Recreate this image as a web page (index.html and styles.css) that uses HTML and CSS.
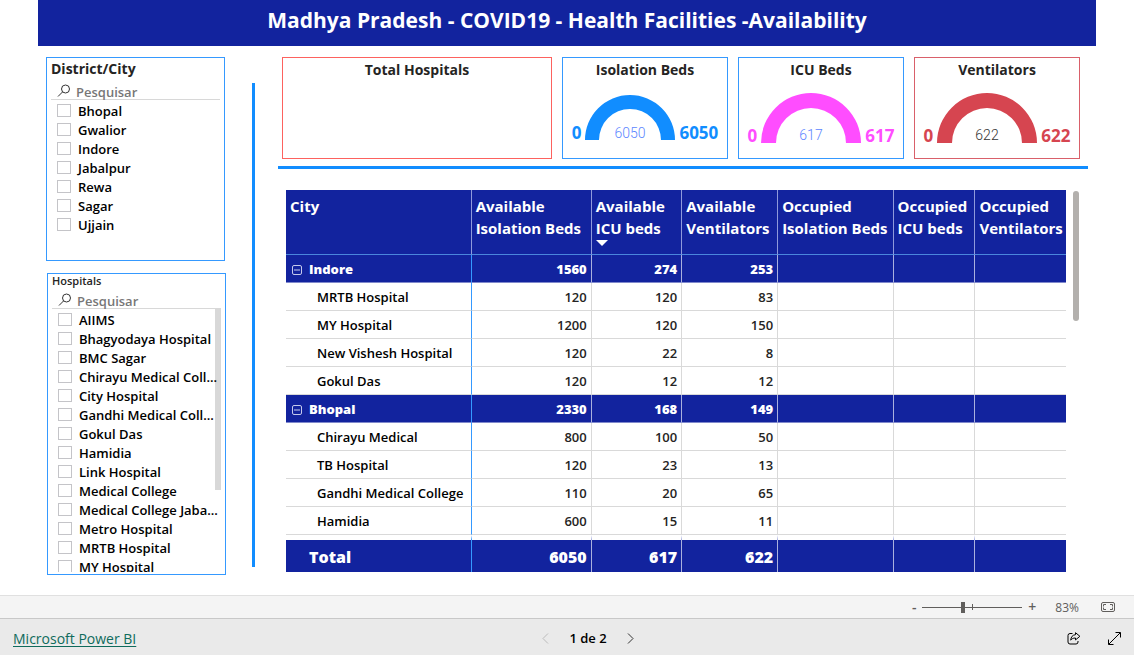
FILE: index.html
```html
<!DOCTYPE html>
<html lang="pt">
<head>
<meta charset="utf-8">
<title>Madhya Pradesh - COVID19 - Health Facilities</title>
<link rel="stylesheet" href="styles.css">
</head>
<body>
<main class="report">
  <h1 class="banner">Madhya Pradesh - COVID19 - Health Facilities -Availability</h1>
  <div class="content">
    <aside class="filters">
      <section class="slicer slicer-city">
        <h2 class="slicer-title">District/City</h2>
        <label class="search">
          <svg class="search-icon" viewBox="0 0 14 14"><circle cx="8.5" cy="5" r="4"/><path d="M5.6 7.9 1 12.5"/></svg>
          <input type="search" placeholder="Pesquisar" aria-label="Pesquisar District/City">
        </label>
        <div class="options">
          <label class="option"><input type="checkbox">Bhopal</label>
          <label class="option"><input type="checkbox">Gwalior</label>
          <label class="option"><input type="checkbox">Indore</label>
          <label class="option"><input type="checkbox">Jabalpur</label>
          <label class="option"><input type="checkbox">Rewa</label>
          <label class="option"><input type="checkbox">Sagar</label>
          <label class="option"><input type="checkbox">Ujjain</label>
        </div>
      </section>
      <section class="slicer slicer-hospital">
        <h2 class="slicer-title small">Hospitals</h2>
        <label class="search">
          <svg class="search-icon" viewBox="0 0 14 14"><circle cx="8.5" cy="5" r="4"/><path d="M5.6 7.9 1 12.5"/></svg>
          <input type="search" placeholder="Pesquisar" aria-label="Pesquisar Hospitals">
        </label>
        <div class="options">
          <span class="list-thumb"></span>
          <label class="option"><input type="checkbox">AIIMS</label>
          <label class="option"><input type="checkbox">Bhagyodaya Hospital</label>
          <label class="option"><input type="checkbox">BMC Sagar</label>
          <label class="option"><input type="checkbox">Chirayu Medical Coll...</label>
          <label class="option"><input type="checkbox">City Hospital</label>
          <label class="option"><input type="checkbox">Gandhi Medical Coll...</label>
          <label class="option"><input type="checkbox">Gokul Das</label>
          <label class="option"><input type="checkbox">Hamidia</label>
          <label class="option"><input type="checkbox">Link Hospital</label>
          <label class="option"><input type="checkbox">Medical College</label>
          <label class="option"><input type="checkbox">Medical College Jaba...</label>
          <label class="option"><input type="checkbox">Metro Hospital</label>
          <label class="option"><input type="checkbox">MRTB Hospital</label>
          <label class="option"><input type="checkbox">MY Hospital</label>
        </div>
      </section>
    </aside>
    <div class="divider"></div>
    <div class="data">
      <div class="cards">
        <section class="card card-total"><h2 class="card-title">Total Hospitals</h2></section>
        <section class="card card-isolation">
          <h2 class="card-title">Isolation Beds</h2>
          <div class="gauge">
            <span>0</span>
            <svg width="90" height="45" viewBox="0 0 90 45"><path d="M0 45A45 45 0 0 1 90 45H76A31 31 0 0 0 14 45Z"/><text x="45" y="43">6050</text></svg>
            <span>6050</span>
          </div>
        </section>
        <section class="card card-icu">
          <h2 class="card-title">ICU Beds</h2>
          <div class="gauge">
            <span>0</span>
            <svg width="100" height="50" viewBox="0 0 100 50"><path d="M0 50A50 50 0 0 1 100 50H85A35 35 0 0 0 15 50Z"/><text x="50" y="47">617</text></svg>
            <span>617</span>
          </div>
        </section>
        <section class="card card-vent">
          <h2 class="card-title">Ventilators</h2>
          <div class="gauge">
            <span>0</span>
            <svg width="100" height="50" viewBox="0 0 100 50"><path d="M0 50A50 50 0 0 1 100 50H85A35 35 0 0 0 15 50Z"/><text x="50" y="47">622</text></svg>
            <span>622</span>
          </div>
        </section>
      </div>
      <div class="rule"></div>
      <div class="matrix-wrap">
        <table class="matrix">
          <colgroup><col class="c1"><col class="c2"><col class="c3"><col class="c4"><col class="c5"><col class="c6"><col class="c7"></colgroup>
          <thead>
            <tr>
              <th>City</th><th>Available<br>Isolation Beds</th>
              <th>Available<br>ICU beds<svg class="sort" viewBox="0 0 12 6"><path d="M0 0H12L6 6Z"/></svg></th>
              <th>Available<br>Ventilators</th><th>Occupied<br>Isolation Beds</th><th>Occupied<br>ICU beds</th><th>Occupied<br>Ventilators</th>
            </tr>
          </thead>
          <tbody>
            <tr class="group"><th><button class="toggle" aria-label="Indore"><svg viewBox="0 0 10 10"><rect x=".5" y=".5" width="9" height="9" rx="1.5"/><path d="M2 5H8"/></svg></button>Indore</th><td>1560</td><td>274</td><td>253</td><td></td><td></td><td></td></tr>
            <tr><th>MRTB Hospital</th><td>120</td><td>120</td><td>83</td><td></td><td></td><td></td></tr>
            <tr><th>MY Hospital</th><td>1200</td><td>120</td><td>150</td><td></td><td></td><td></td></tr>
            <tr><th>New Vishesh Hospital</th><td>120</td><td>22</td><td>8</td><td></td><td></td><td></td></tr>
            <tr><th>Gokul Das</th><td>120</td><td>12</td><td>12</td><td></td><td></td><td></td></tr>
            <tr class="group"><th><button class="toggle" aria-label="Bhopal"><svg viewBox="0 0 10 10"><rect x=".5" y=".5" width="9" height="9" rx="1.5"/><path d="M2 5H8"/></svg></button>Bhopal</th><td>2330</td><td>168</td><td>149</td><td></td><td></td><td></td></tr>
            <tr><th>Chirayu Medical</th><td>800</td><td>100</td><td>50</td><td></td><td></td><td></td></tr>
            <tr><th>TB Hospital</th><td>120</td><td>23</td><td>13</td><td></td><td></td><td></td></tr>
            <tr><th>Gandhi Medical College</th><td>110</td><td>20</td><td>65</td><td></td><td></td><td></td></tr>
            <tr><th>Hamidia</th><td>600</td><td>15</td><td>11</td><td></td><td></td><td></td></tr>
          </tbody>
          <tfoot>
            <tr><th>Total</th><td>6050</td><td>617</td><td>622</td><td></td><td></td><td></td></tr>
          </tfoot>
        </table>
        <span class="matrix-thumb"></span>
      </div>
    </div>
  </div>
</main>
<div class="zoombar">
  <button class="step" aria-label="Reduzir">-</button>
  <input class="zoom" type="range" min="0" max="100" value="40" aria-label="Zoom">
  <button class="step" aria-label="Ampliar">+</button>
  <span class="percent">83%</span>
  <button class="icon-btn" aria-label="Ajustar à página"><svg width="14" height="10" viewBox="0 0 14 10"><rect x=".5" y=".5" width="13" height="9" rx="1.5"/><path d="M5 2.5H2.5V4.5M2.5 5.5V7.5H5M9 2.5H11.5V4.5M11.5 5.5V7.5H9"/></svg></button>
</div>
<footer class="footer">
  <a class="brand" href="#">Microsoft Power BI</a>
  <nav class="pager">
    <button class="page-btn" disabled aria-label="Anterior"><svg width="7" height="11" viewBox="0 0 7 11"><path d="M6 .5 1 5.500 6 10.500"/></svg></button>
    <span>1 de 2</span>
    <button class="page-btn" aria-label="Seguinte"><svg width="7" height="11" viewBox="0 0 7 11"><path d="M1 .5 6 5.500 1 10.500"/></svg></button>
  </nav>
  <div class="actions">
    <button class="icon-btn" aria-label="Partilhar"><svg width="14" height="13" viewBox="0 0 14 13"><path d="M5.5 1.5H3A2 2 0 0 0 1 3.500V10A2 2 0 0 0 3 12H9A2 2 0 0 0 11 10V9"/><path d="M8.500.7 12.900 4.300 8.500 7.900V6C6 6 4.800 6.800 3.700 8.200 4 5 5.500 2.900 8.500 2.700Z"/></svg></button>
    <button class="icon-btn" aria-label="Ecrã inteiro"><svg width="13" height="13" viewBox="0 0 13 13"><path d="M.8 12.200 12.200.8M7.500.5H12.500V5.500M.5 7.500V12.500H5.500"/></svg></button>
  </div>
</footer>
</body>
</html>
```
FILE: styles.css
```css
* { box-sizing: border-box; }
body {
  margin: 0;
  min-height: 100vh;
  display: flex;
  flex-direction: column;
  background: #fff;
  color: #000;
  font-family: "Open Sans", "Noto Sans", sans-serif;
  font-size: 13px;
}
button { padding: 0; border: 0; background: none; font: inherit; color: inherit; }
h1, h2 { margin: 0; }
svg { display: block; }

.report { flex: 1; margin: 0 38px; }
.banner {
  height: 46px;
  background: #12239e;
  color: #fff;
  font-size: 21px;
  line-height: 40px;
  font-weight: 700;
  text-align: center;
}
.content { display: flex; padding: 11px 9px 0 8px; }

/* Filters */
.filters { display: flex; flex-direction: column; gap: 12px; width: 179px; }
.slicer { display: flex; flex-direction: column; border: 1px solid #3599ff; padding: 0 4px; }
.slicer-city { height: 204px; }
.slicer-hospital { height: 302px; margin: 0 -1px 0 1px; padding-bottom: 2px; }
.slicer-title { color: #252423; font-size: 14px; line-height: 22px; padding-bottom: 2px; font-weight: 700; }
.slicer-title.small { font-size: 11px; line-height: 14px; padding-bottom: 3px; font-weight: 600; }
.search { display: flex; align-items: center; flex: none; height: 18px; border-bottom: 1px solid #d8d8d8; padding-left: 6px; gap: 5px; }
.search-icon { width: 14px; height: 14px; fill: none; stroke: #333; }
.search input { flex: 1; min-width: 0; height: 18px; padding: 2px 0 0; border: 0; outline: 0; background: none; font: 600 13px/16px "Open Sans", sans-serif; }
.search input::placeholder { color: #777; opacity: 1; }
.options { position: relative; flex: 1; min-height: 0; overflow: hidden; padding-top: 1px; }
.option { position: relative; display: flex; align-items: center; gap: 7px; height: 19px; padding-left: 6px; font-weight: 600; white-space: nowrap; }
.option input { appearance: none; flex: none; width: 14px; height: 13px; margin: 0; border: 1px solid #c4c4c8; background: #fff; }
.list-thumb { position: absolute; top: 0; right: 0; width: 6px; height: 181px; background: #d8d8d8; }

.divider { flex: none; width: 3px; height: 484px; margin: 26px 23px 0 27px; background: #118dff; }

/* Summary cards */
.data { flex: 1; min-width: 0; }
.cards { display: grid; grid-template-columns: 270fr 166fr 166fr 166fr; gap: 10px; height: 102px; padding: 0 7px 0 4px; }
.card { border: 1px solid #3599ff; min-width: 0; }
.card-total { border-color: #fd625e; }
.card-vent { border-color: #d9606a; }
.card-title { color: #252423; font-size: 14px; line-height: 23px; font-weight: 700; text-align: center; }
.gauge { display: flex; justify-content: center; align-items: flex-end; gap: 4px; padding-top: 12px; font-size: 17px; line-height: 14px; font-weight: 700; }
.card-isolation .gauge { padding-top: 14px; }
.gauge text { font: 300 14px Roboto, sans-serif; text-anchor: middle; }
.card-isolation { color: #118dff; fill: #118dff; }
.card-icu { color: #ff4dff; fill: #ff4dff; }
.card-vent { color: #d64550; fill: #d64550; }
.card-isolation text, .card-icu text { fill: #5c86ff; }
.card-vent text { fill: #333; }
.rule { height: 3px; margin: 7px -1px 0 0; background: #118dff; }

/* Matrix */
.matrix-wrap { display: flex; gap: 7px; padding: 21px 8px 0; }
.matrix { flex: 1; min-width: 0; table-layout: fixed; border-collapse: separate; border-spacing: 0; }
.c1 { width: 23.8%; } .c2 { width: 15.4%; } .c3 { width: 11.6%; } .c4 { width: 12.3%; }
.c5 { width: 14.8%; } .c6 { width: 10.5%; } .c7 { width: 11.6%; }
.matrix th, .matrix td { padding: 0 4px; height: 28px; border-right: 1px solid #d9d9d9; border-bottom: 1px solid #d9d9d9; font-weight: 600; white-space: nowrap; }
.matrix th { text-align: left; }
.matrix td { text-align: right; color: #252423; }
.matrix tbody th, .matrix tfoot th { padding-left: 31px; }
.matrix tbody tr > th, .matrix tfoot tr > th { border-right-color: #3599ff; }
.matrix tr > :last-child { border-right: 0; }
.matrix thead th { height: 65px; padding: 5px 2px 0 4px; vertical-align: top; background: #12239e; color: #fff; font-size: 15px; line-height: 22px; font-weight: 700; border-right-color: #8f9adb; border-bottom-color: #4a86dc; }
.sort { width: 12px; height: 6px; margin-top: 1px; fill: #fff; }
.matrix .group > * { background: #12239e; color: #fff; font-weight: 800; border-right-color: #a9b0de; border-bottom-color: #8089cc; }
.matrix .group th { padding-left: 6px; border-right-color: #3599ff; }
.toggle { display: inline-block; vertical-align: -1px; margin-right: 7px; }
.toggle svg { width: 10px; height: 10px; fill: none; stroke: #c5caec; }
.matrix tfoot tr > * { height: 37px; border-top: 5px solid #fff; border-bottom: 0; border-right-color: #a9b0de; background: #12239e; color: #fff; font-size: 16px; font-weight: 800; padding-top: 2px; }
.matrix tfoot tr > th { padding-left: 23px; border-right-color: #3599ff; }
.matrix-thumb { flex: none; width: 6px; height: 130px; margin-top: 1px; border-radius: 3px; background: #b3b0ad; }

/* Bottom bars */
.zoombar { display: flex; align-items: center; justify-content: flex-end; height: 23px; padding-right: 19px; border-top: 1px solid #e0e0e0; background: #f4f4f4; color: #605e5c; }
.step { width: 8px; font-size: 14px; line-height: 20px; font-weight: 600; }
.zoom { appearance: none; width: 100px; height: 12px; margin: 0 6px 0 4px; background: linear-gradient(#605e5c, #605e5c) 50px 3px / 1px 6px no-repeat, linear-gradient(#605e5c, #605e5c) 0 6px / 100% 1px no-repeat; }
.zoom::-webkit-slider-thumb { appearance: none; width: 4px; height: 11px; background: #605e5c; }
.percent { margin: 0 22px 0 19px; font-size: 12px; font-weight: 400; }
.icon-btn svg { fill: none; stroke: currentColor; }
.footer { display: grid; grid-template-columns: 1fr auto 1fr; align-items: center; height: 37px; padding: 2px 13px 0; border-top: 1px solid #c8c8c8; background: #eaeaea; }
.brand { justify-self: start; color: #0f6b5c; font-size: 14px; text-underline-offset: 2px; }
.pager { display: flex; align-items: center; gap: 20px; margin-left: 42px; font-weight: 600; }
.page-btn svg { fill: none; stroke: #333; }
.page-btn:disabled svg { stroke: #bbb; }
.actions { display: flex; align-items: center; justify-content: flex-end; gap: 27px; }
```
